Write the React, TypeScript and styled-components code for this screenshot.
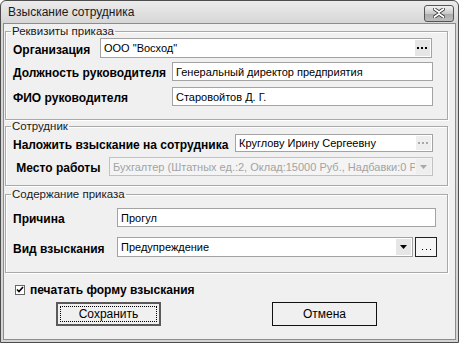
import styled, { createGlobalStyle } from "styled-components";

const GlobalStyle = createGlobalStyle`
  html, body {
    margin: 0;
    padding: 0;
    background: #ffffff;
  }
  body {
    font-family: "Liberation Sans", Arial, sans-serif;
    color: #000;
  }
`;

const Window = styled.div`
  width: 459px;
  height: 343px;
  box-sizing: border-box;
  border: 1px solid #4d4d4d;
  border-radius: 6px 6px 0 0;
  background: linear-gradient(#ececec, #d6d6d6 22px, #d4d4d4);
  display: flex;
  flex-direction: column;
  overflow: hidden;
`;

const TitleBar = styled.div`
  height: 22px;
  flex: none;
  display: flex;
  align-items: center;
  justify-content: space-between;
  padding: 0 4px 0 7px;
`;

const Title = styled.span`
  font-size: 12px;
  color: #1a1a1a;
`;

const CloseButton = styled.div`
  width: 30px;
  height: 17px;
  box-sizing: border-box;
  border: 1px solid #555;
  border-radius: 3px;
  background: linear-gradient(#f2f2f2, #c9c9c9 50%, #a9a9a9 51%, #bdbdbd);
  display: flex;
  align-items: center;
  justify-content: center;
  margin-top: 2px;
`;

const Client = styled.div`
  flex: 1;
  margin: 0 2px 2px 2px;
  border: 1px solid #8c8c8c;
  background: #f0f0f0;
  display: flex;
  flex-direction: column;
`;

const Group = styled.fieldset<{ $mt: number; $pb: number }>`
  margin: ${(p) => p.$mt}px 7px 0 1px;
  padding: 0 0 ${(p) => p.$pb}px 0;
  border: 1px solid #a9a9a9;
  box-shadow: inset 1px 1px 0 #ffffff, 1px 1px 0 #ffffff;
  min-inline-size: 0;
`;

const Legend = styled.legend`
  margin-left: 5px;
  padding: 0 1px;
  font-size: 11.5px;
  line-height: 12px;
  color: #1a1a1a;
`;

const Row = styled.div<{ $h: number; $mt: number; $pr: number }>`
  display: flex;
  align-items: center;
  height: ${(p) => p.$h}px;
  margin-top: ${(p) => p.$mt}px;
  padding: 0 ${(p) => p.$pr}px 0 7px;
`;

const Label = styled.span<{ $w: number }>`
  width: ${(p) => p.$w}px;
  flex: none;
  padding-top: 3px;
  font-size: 12px;
  font-weight: bold;
  white-space: nowrap;
`;

const Field = styled.div<{ $disabled?: boolean }>`
  flex: 1;
  min-width: 0;
  height: 100%;
  box-sizing: border-box;
  border: 1px solid ${(p) => (p.$disabled ? "#c2c2c2" : "#a3a3a3")};
  background: ${(p) => (p.$disabled ? "#f4f4f4" : "#ffffff")};
  display: flex;
  align-items: center;
  font-size: 11px;
  color: ${(p) => (p.$disabled ? "#a3a3a3" : "#000")};
`;

const FieldText = styled.span`
  flex: 1;
  min-width: 0;
  padding-left: 3px;
  white-space: nowrap;
  overflow: hidden;
`;

const InnerButton = styled.span<{ $disabled?: boolean }>`
  width: 15px;
  flex: none;
  align-self: stretch;
  margin: 1px;
  background: ${(p) => (p.$disabled ? "#eeeeee" : "#e6e6e6")};
  display: flex;
  align-items: center;
  justify-content: center;
`;

const SideButton = styled.div`
  width: 22px;
  height: 100%;
  flex: none;
  margin-left: 2px;
  box-sizing: border-box;
  border: 1px solid #222;
  background: #f6f6f6;
  display: flex;
  align-items: flex-end;
  justify-content: center;
  padding-bottom: 5px;
`;

const CheckRow = styled.label`
  display: flex;
  align-items: center;
  gap: 5px;
  height: 11px;
  margin-top: 11px;
  padding-left: 11px;
  font-size: 12px;
  font-weight: bold;
`;

const CheckBox = styled.span`
  width: 10px;
  height: 10px;
  box-sizing: border-box;
  border: 1px solid #666;
  background: #fff;
  display: flex;
  align-items: center;
  justify-content: center;
`;

const Buttons = styled.div`
  display: flex;
  gap: 111px;
  margin-top: 7px;
  padding-left: 52px;
`;

const Button = styled.div<{ $default?: boolean }>`
  width: 105px;
  height: 24px;
  box-sizing: border-box;
  border: ${(p) => (p.$default ? "2px solid #5a5a5a" : "1px solid #111")};
  background: #f0f0f0;
  display: flex;
  align-items: center;
  justify-content: center;
  padding: ${(p) => (p.$default ? "2px" : "0")};
  font-size: 12px;
`;

const FocusRect = styled.span`
  flex: 1;
  align-self: stretch;
  border: 1px dotted #000;
  display: flex;
  align-items: center;
  justify-content: center;
`;

const Dots = ({ color }: { color: string }) => (
  <svg width="11" height="3" viewBox="0 0 11 3">
    <rect x="0" y="0" width="2" height="2" fill={color} />
    <rect x="4" y="0" width="2" height="2" fill={color} />
    <rect x="8" y="0" width="2" height="2" fill={color} />
  </svg>
);

const Arrow = ({ color }: { color: string }) => (
  <svg width="7" height="4" viewBox="0 0 7 4">
    <path d="M0 0h7L3.5 4z" fill={color} />
  </svg>
);

const App = () => {
  return (
    <>
      <GlobalStyle />
      <Window>
        <TitleBar>
          <Title>Взыскание сотрудника</Title>
          <CloseButton>
            <svg width="12" height="10" viewBox="0 0 12 10">
              <path
                d="M1.5 1L6 4.2 10.5 1M1.5 9L6 5.8 10.5 9"
                stroke="#3a3a3a"
                strokeWidth="3.4"
                strokeLinecap="round"
                fill="none"
              />
              <path
                d="M1.5 1L6 4.2 10.5 1M1.5 9L6 5.8 10.5 9"
                stroke="#ffffff"
                strokeWidth="1.8"
                strokeLinecap="round"
                fill="none"
              />
            </svg>
          </CloseButton>
        </TitleBar>
        <Client>
          <Group $mt={1} $pb={13}>
            <Legend>Реквизиты приказа</Legend>
            <Row $h={20} $mt={1} $pr={15}>
              <Label $w={87}>Организация</Label>
              <Field>
                <FieldText>ООО "Восход"</FieldText>
                <InnerButton>
                  <Dots color="#000" />
                </InnerButton>
              </Field>
            </Row>
            <Row $h={19} $mt={4} $pr={14}>
              <Label $w={159}>Должность руководителя</Label>
              <Field>
                <FieldText>Генеральный директор предприятия</FieldText>
              </Field>
            </Row>
            <Row $h={19} $mt={6} $pr={14}>
              <Label $w={159}>ФИО руководителя</Label>
              <Field>
                <FieldText>Старовойтов Д. Г.</FieldText>
              </Field>
            </Row>
          </Group>

          <Group $mt={0} $pb={9}>
            <Legend>Сотрудник</Legend>
            <Row $h={18} $mt={2} $pr={14}>
              <Label $w={222}>Наложить взыскание на сотрудника</Label>
              <Field>
                <FieldText>Круглову Ирину Сергеевну</FieldText>
                <InnerButton $disabled>
                  <Dots color="#a8a8a8" />
                </InnerButton>
              </Field>
            </Row>
            <Row $h={19} $mt={5} $pr={14}>
              <Label $w={96}>&nbsp;Место работы</Label>
              <Field $disabled>
                <FieldText>
                  Бухгалтер (Штатных ед.:2, Оклад:15000 Руб., Надбавки:0 Руб.)
                </FieldText>
                <InnerButton $disabled>
                  <Arrow color="#a8a8a8" />
                </InnerButton>
              </Field>
            </Row>
          </Group>

          <Group $mt={2} $pb={15}>
            <Legend>Содержание приказа</Legend>
            <Row $h={19} $mt={8} $pr={11}>
              <Label $w={104}>Причина</Label>
              <Field>
                <FieldText>Прогул</FieldText>
              </Field>
            </Row>
            <Row $h={20} $mt={10} $pr={10}>
              <Label $w={104}>Вид взыскания</Label>
              <Field>
                <FieldText>Предупреждение</FieldText>
                <InnerButton>
                  <Arrow color="#000" />
                </InnerButton>
              </Field>
              <SideButton>
                <svg width="9" height="2" viewBox="0 0 9 2">
                  <rect x="0" y="0" width="1" height="1" fill="#000" />
                  <rect x="4" y="0" width="1" height="1" fill="#000" />
                  <rect x="8" y="0" width="1" height="1" fill="#000" />
                </svg>
              </SideButton>
            </Row>
          </Group>

          <CheckRow>
            <CheckBox>
              <svg width="8" height="7" viewBox="0 0 8 7">
                <path d="M1 3.5L3 5.5 7 1" stroke="#000" strokeWidth="1.6" fill="none" />
              </svg>
            </CheckBox>
            печатать форму взыскания
          </CheckRow>

          <Buttons>
            <Button $default>
              <FocusRect>Сохранить</FocusRect>
            </Button>
            <Button>Отмена</Button>
          </Buttons>
        </Client>
      </Window>
    </>
  );
};

export default App;
